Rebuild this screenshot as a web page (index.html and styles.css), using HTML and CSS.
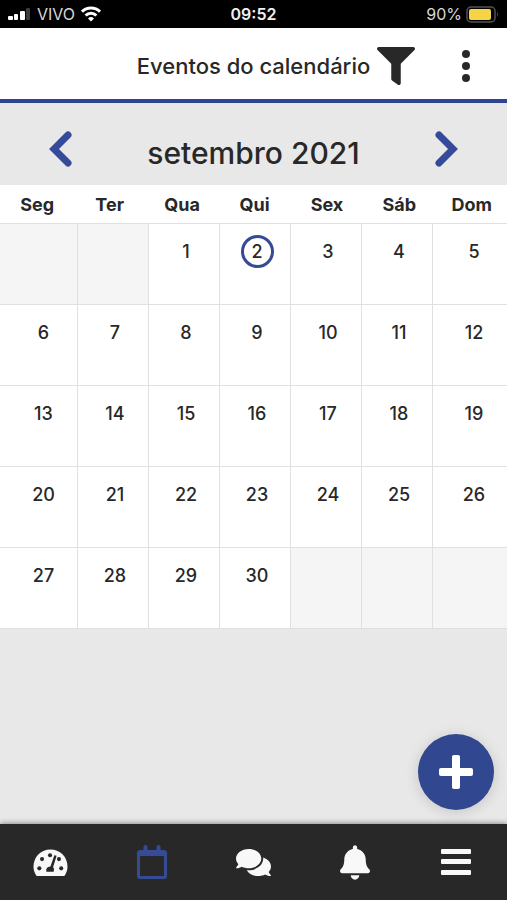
FILE: index.html
```html
<!DOCTYPE html>
<html lang="pt-BR">
<head>
<meta charset="utf-8">
<meta name="viewport" content="width=device-width, initial-scale=1">
<title>Eventos do calendário</title>
<link rel="stylesheet" href="styles.css">
</head>
<body>
<div class="status">
  <div class="status-left">
    <svg width="23" height="14" viewBox="0 0 23 14" aria-hidden="true">
      <rect x="0" y="9" width="5" height="4" rx="1" fill="#fff"/>
      <rect x="6" y="7" width="4" height="6" rx="1" fill="#fff"/>
      <rect x="12" y="4" width="5" height="9" rx="1" fill="#fff"/>
      <rect x="18" y="1" width="4" height="12" rx="1" fill="#3c3c3c"/>
    </svg>
    <span>VIVO</span>
    <svg width="20" height="16" viewBox="0 0 20 16" fill="none" stroke="#fff" stroke-width="3" aria-hidden="true">
      <path d="M1 5.7a12.7 12.7 0 0 1 18 0"/>
      <path d="M4.6 9.5a7.6 7.6 0 0 1 10.800 0"/>
      <path d="M10 15.500l-3-3.100a4.300 4.300 0 0 1 6 0z" fill="#fff" stroke="none"/>
    </svg>
  </div>
  <span class="clock">09:52</span>
  <div class="status-right">
    <span>90%</span>
    <svg width="33" height="17" viewBox="0 0 33 17" aria-hidden="true">
      <rect x="1" y="1" width="28" height="15" rx="4" fill="none" stroke="#55534c" stroke-width="1.500"/>
      <rect x="3" y="3" width="22" height="11" rx="2" fill="#f5d445"/>
      <path d="M31 6q2 2.500 0 5z" fill="#55534c"/>
    </svg>
  </div>
</div>

<header class="topbar">
  <h1>Eventos do calendário</h1>
  <div class="actions">
    <button type="button" aria-label="Filtrar">
      <svg width="38" height="38" viewBox="0 0 512 512" fill="#282828" aria-hidden="true"><path d="M487.976 0H24.028C2.710 0-8.047 25.866 7.058 40.971L192 225.941V432c0 7.831 3.821 15.170 10.237 19.662l80 55.980C298.020 518.690 320 507.493 320 487.980V225.941L504.947 40.970C520.021 25.896 509.338 0 487.976 0z"/></svg>
    </button>
    <button type="button" aria-label="Mais opções">
      <svg width="8" height="32" viewBox="0 0 8 32" fill="#282828" aria-hidden="true"><circle cx="4" cy="4" r="4"/><circle cx="4" cy="16" r="4"/><circle cx="4" cy="28" r="4"/></svg>
    </button>
  </div>
</header>

<main>
  <div class="month">
    <button type="button" aria-label="Mês anterior">
      <svg width="24" height="36" viewBox="0 0 24 36" aria-hidden="true"><path d="M19 4L5 18L19 32"/></svg>
    </button>
    <h2>setembro 2021</h2>
    <button type="button" aria-label="Próximo mês">
      <svg width="24" height="36" viewBox="0 0 24 36" aria-hidden="true"><path d="M5 4L19 18L5 32"/></svg>
    </button>
  </div>
  <table class="calendar">
    <thead>
      <tr><th scope="col">Seg</th><th scope="col">Ter</th><th scope="col">Qua</th><th scope="col">Qui</th><th scope="col">Sex</th><th scope="col">Sáb</th><th scope="col">Dom</th></tr>
    </thead>
    <tbody>
      <tr><td class="empty"></td><td class="empty"></td><td>1</td><td><span class="today">2</span></td><td>3</td><td>4</td><td>5</td></tr>
      <tr><td>6</td><td>7</td><td>8</td><td>9</td><td>10</td><td>11</td><td>12</td></tr>
      <tr><td>13</td><td>14</td><td>15</td><td>16</td><td>17</td><td>18</td><td>19</td></tr>
      <tr><td>20</td><td>21</td><td>22</td><td>23</td><td>24</td><td>25</td><td>26</td></tr>
      <tr><td>27</td><td>28</td><td>29</td><td>30</td><td class="empty"></td><td class="empty"></td><td class="empty"></td></tr>
    </tbody>
  </table>
</main>

<div class="dock">
  <button type="button" class="add" aria-label="Adicionar evento">
    <svg width="34" height="34" viewBox="0 0 34 34" fill="#fff" aria-hidden="true"><rect x="13" y="0" width="8" height="34" rx="2"/><rect x="0" y="13" width="34" height="8" rx="2"/></svg>
  </button>
  <nav class="tabs">
    <a href="#painel" aria-label="Painel">
      <svg width="35" height="35" viewBox="0 0 36 36" aria-hidden="true">
        <path d="M3.500 31.500C1.500 28.500.5 25.500.5 22a17.500 17.500 0 0 1 35 0c0 3.500-1 6.500-3 9.500q-.5.500-1.500.5H5q-1 0-1.500-.5z" fill="#f8f8f8"/>
        <g fill="#282828"><circle cx="6.500" cy="24" r="2.100"/><circle cx="9.300" cy="14.500" r="2.100"/><circle cx="17.500" cy="10.500" r="2.100"/><circle cx="26.700" cy="14.500" r="2.100"/><circle cx="29" cy="24" r="2.100"/>
        <path d="M22 10.500l2.300.6-3.600 11.600q1.500 1.500.6 4.800h-7.600q-.9-5 4.200-5.400z"/></g>
      </svg>
    </a>
    <a href="#calendario" aria-label="Calendário" aria-current="page">
      <svg width="30" height="36" viewBox="0 0 30 36" fill="#364b96" aria-hidden="true"><path fill-rule="evenodd" d="M6.500 6V3q0-2 2-2t2 2v3h9V3q0-2 2-2t2 2v3H27q3 0 3 3v23q0 3-3 3H3q-3 0-3-3V9q0-3 3-3zM3 12v19.500q0 .5.5.500h23q.5 0 .5-.5V12z"/></svg>
    </a>
    <a href="#mensagens" aria-label="Mensagens">
      <svg width="35" height="35" viewBox="0 0 576 576" fill="#f8f8f8" aria-hidden="true"><path d="M416 224c0-88.400-93.100-160-208-160S0 135.600 0 224c0 34.300 14.100 65.900 38 92-13.400 30.200-35.500 54.200-35.800 54.500-2.200 2.300-2.800 5.700-1.500 8.700S4.800 384 8 384c36.600 0 66.900-12.300 88.700-25C128.900 374.700 167 384 208 384c114.900 0 208-71.600 208-160zm122 220c23.900-26 38-57.700 38-92 0-66.900-53.500-124.200-129.300-148.100.9 6.600 1.300 13.300 1.300 20.100 0 105.900-107.700 192-240 192-10.800 0-21.300-.8-31.700-1.900C207.800 471.600 281.800 512 368 512c41 0 79.100-9.200 111.300-25 21.800 12.700 52.100 25 88.700 25 3.200 0 6.100-1.900 7.300-4.800 1.300-2.900.7-6.300-1.500-8.700-.3-.3-22.400-24.200-35.800-54.500z"/></svg>
    </a>
    <a href="#avisos" aria-label="Avisos">
      <svg width="30" height="35" viewBox="0 0 448 512" fill="#f8f8f8" aria-hidden="true"><path d="M224 512c35.320 0 63.970-28.650 63.970-64H160.030c0 35.350 28.650 64 63.970 64zm215.390-149.710c-19.320-20.760-55.470-51.990-55.470-154.290 0-77.700-54.480-139.900-127.940-155.160V32c0-17.670-14.320-32-31.980-32s-31.980 14.330-31.980 32v20.840C118.560 68.100 64.080 130.300 64.080 208c0 102.300-36.150 133.530-55.470 154.290-6 6.450-8.660 14.160-8.610 21.710.11 16.400 12.980 32 32.100 32h383.800c19.120 0 32-15.600 32.100-32 .05-7.550-2.610-15.270-8.610-21.710z"/></svg>
    </a>
    <a href="#menu" aria-label="Menu">
      <svg width="30" height="36" viewBox="0 0 30 36" fill="#f8f8f8" aria-hidden="true"><rect y="5" width="30" height="5" rx="1"/><rect y="15" width="30" height="5" rx="1"/><rect y="26" width="30" height="5" rx="1"/></svg>
    </a>
  </nav>
</div>
</body>
</html>
```
FILE: styles.css
```css
* { box-sizing: border-box; }

body {
  margin: 0;
  min-height: 100vh;
  display: flex;
  flex-direction: column;
  background: #e8e8e8;
  color: #282828;
  font-family: Inter, "Liberation Sans", sans-serif;
}

button {
  display: flex;
  padding: 0;
  border: 0;
  background: none;
  cursor: pointer;
}

svg { display: block; }

.status {
  display: grid;
  grid-template-columns: 1fr auto 1fr;
  align-items: center;
  height: 28px;
  padding: 0 8px;
  background: #000;
  color: #d8d8d8;
  font-size: 16px;
  line-height: 20px;
}

.status-left,
.status-right {
  display: flex;
  align-items: center;
  gap: 6px;
}

.status-right {
  justify-content: flex-end;
  gap: 4px;
}

.clock {
  color: #f0f0f0;
  font-weight: 600;
}

.topbar {
  display: grid;
  grid-template-columns: 1fr auto 1fr;
  align-items: center;
  height: 75px;
  padding-top: 4px;
  background: #fff;
  border-bottom: 4px solid #2f458f;
}

.topbar h1 {
  grid-column: 2;
  margin: 0;
  font-size: 22px;
  font-weight: 500;
  line-height: 28px;
}

.actions {
  display: flex;
  align-items: center;
  justify-content: space-between;
  padding: 0 37px 0 7px;
}

main { flex: 1; }

.month {
  display: flex;
  align-items: flex-start;
  justify-content: space-between;
  height: 82px;
  padding: 28px 49px 0;
}

.month path {
  fill: none;
  stroke: #354a98;
  stroke-width: 7;
  stroke-linecap: round;
}

.month h2 {
  margin: 0;
  font-size: 30px;
  font-weight: 500;
  line-height: 44px;
}

.calendar,
.calendar thead,
.calendar tbody { display: block; }

.calendar tr {
  display: grid;
  grid-template-columns: 78fr repeat(5, 71fr) 74fr;
}

.calendar thead tr {
  grid-template-columns: repeat(7, 1fr);
  background: #fff;
  border-bottom: 1px solid #e0e0e0;
}

.calendar th {
  padding: 8px 0 6px 2px;
  font-size: 18px;
  font-weight: 700;
  line-height: 24px;
  text-align: center;
}

.calendar td {
  display: flex;
  justify-content: center;
  height: 81px;
  padding: 11px 0 0 4px;
  background: #fff;
  border: solid #e0e0e0;
  border-width: 0 1px 1px 0;
  font-size: 18px;
  font-weight: 500;
  line-height: 34px;
}

.calendar td:first-child { padding-left: 10px; }

.calendar td:last-child {
  padding-left: 8px;
  border-right: 0;
}

.calendar td.empty { background: #f5f5f5; }

.today {
  width: 33px;
  height: 33px;
  border: 3px solid #364b96;
  border-radius: 50%;
  line-height: 28px;
  text-align: center;
}

.dock {
  position: sticky;
  bottom: 0;
}

.add {
  position: absolute;
  right: 13px;
  bottom: 90px;
  width: 76px;
  height: 76px;
  align-items: center;
  justify-content: center;
  border-radius: 50%;
  background: #31478f;
  box-shadow: 0 2px 14px rgba(0, 0, 0, 0.15);
}

.tabs {
  display: grid;
  grid-template-columns: repeat(5, 1fr);
  height: 76px;
  background: #282828;
  box-shadow: 0 -1px 5px rgba(0, 0, 0, 0.4);
}

.tabs a {
  display: flex;
  align-items: center;
  justify-content: center;
}
```
